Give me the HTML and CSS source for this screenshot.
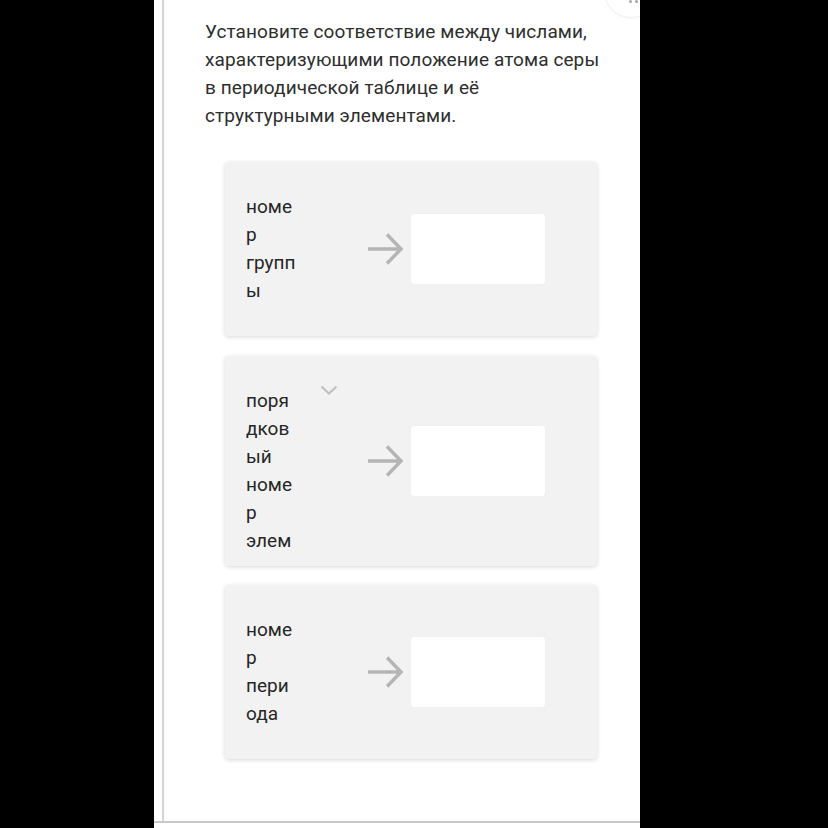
FILE: index.html
```html
<!DOCTYPE html>
<html lang="ru">
<head>
<meta charset="utf-8">
<title>Соответствие</title>
<link rel="stylesheet" href="styles.css">
</head>
<body>
<div class="panel">
  <div class="fab"><span class="fab-dots"></span></div>
  <div class="sheet">
    <p class="question">Установите соответствие между числами, характеризующими положение атома серы в периодической таблице и её структурными элементами.</p>
    <div class="cards">
      <div class="card">
        <div class="label">номер группы</div>
        <svg class="arrow" viewBox="0 0 36 32" width="36" height="32"><path d="M1 16 H34 M20 1.5 L34 16 L20 30.5" fill="none" stroke="#b5b5b5" stroke-width="3.4"/></svg>
        <div class="answer"></div>
      </div>
      <div class="card card--clip">
        <svg class="chevron" viewBox="0 0 18 10" width="18" height="10"><path d="M1.5 1.5 L9 8.5 L16.5 1.5" fill="none" stroke="#c0c0c0" stroke-width="2.2"/></svg>
        <div class="label">порядковый номер элемента</div>
        <svg class="arrow" viewBox="0 0 36 32" width="36" height="32"><path d="M1 16 H34 M20 1.5 L34 16 L20 30.5" fill="none" stroke="#b5b5b5" stroke-width="3.4"/></svg>
        <div class="answer"></div>
      </div>
      <div class="card">
        <div class="label">номер периода</div>
        <svg class="arrow" viewBox="0 0 36 32" width="36" height="32"><path d="M1 16 H34 M20 1.5 L34 16 L20 30.5" fill="none" stroke="#b5b5b5" stroke-width="3.4"/></svg>
        <div class="answer"></div>
      </div>
    </div>
  </div>
  <div class="rule"></div>
</div>
</body>
</html>
```

FILE: styles.css
```css
html, body {
  margin: 0;
  padding: 0;
  background: #000;
  height: 828px;
  overflow: hidden;
}

body {
  font-family: Roboto, "Noto Sans", "Liberation Sans", sans-serif;
  color: #2b2b2b;
}

.panel {
  position: relative;
  margin-left: 154px;
  width: 486px;
  height: 828px;
  background: #fff;
  overflow: hidden;
}

.fab {
  position: absolute;
  left: 450px;
  top: -36px;
  width: 52px;
  height: 52px;
  border-radius: 50%;
  border: 1px solid #f0f0f0;
  box-shadow: 0 1px 2px rgba(0, 0, 0, 0.03);
  background: #fff;
}

.fab-dots {
  position: absolute;
  left: 24px;
  top: 35px;
  width: 3px;
  height: 3px;
  border-radius: 50%;
  background: #a8a8a8;
  box-shadow: 6px 0 0 #a8a8a8;
}

.sheet {
  margin-left: 8px;
  height: 821px;
  border-left: 2px solid #d4d4d4;
  padding: 18px 0 0 41px;
  box-sizing: border-box;
}

.rule {
  height: 2px;
  background: #c8c8c8;
}

.question {
  margin: 0;
  width: 397px;
  font-size: 19px;
  letter-spacing: 0.1px;
  line-height: 28px;
  color: #2e2e2e;
}

.cards {
  margin: 32px 0 0 20px;
  width: 372px;
  display: flex;
  flex-direction: column;
  gap: 19.5px;
}

.card {
  position: relative;
  display: flex;
  align-items: center;
  padding-left: 21px;
  background: #f2f2f2;
  border-radius: 4px;
  box-shadow: 0 1px 4px rgba(0, 0, 0, 0.16);
}

.label {
  width: 51px;
  padding: 31px 0 31px;
  font-size: 19px;
  line-height: 28px;
  color: #262626;
  overflow-wrap: anywhere;
}

.card--clip {
  min-height: 210px;
}

.card--clip .label {
  align-self: flex-start;
  max-height: 200px;
  padding-bottom: 0;
  overflow: hidden;
  box-sizing: border-box;
}

.chevron {
  position: absolute;
  left: 95px;
  top: 29px;
}

.arrow {
  margin-left: 70px;
  flex: none;
}

.answer {
  margin-left: 8px;
  width: 134px;
  height: 70px;
  background: #fff;
  border-radius: 3px;
  box-shadow: 0 0 1px rgba(0, 0, 0, 0.08);
}
```
